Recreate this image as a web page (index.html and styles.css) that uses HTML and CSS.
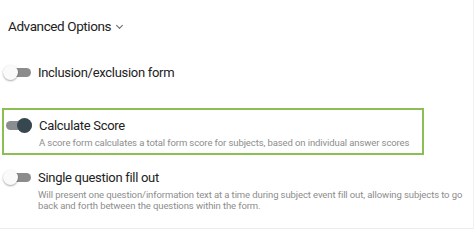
FILE: index.html
```html
<!DOCTYPE html>
<html lang="en">
<head>
    <meta charset="UTF-8">
    <meta name="viewport" content="width=device-width, initial-scale=1.0">
    <title>Advanced Options</title>
    <link rel="stylesheet" href="styles.css">
</head>
<body>
    <div class="panel">
        <h2 class="section-title">Advanced Options <span class="chevron"></span></h2>

        <div class="option">
            <span class="toggle"><span class="knob"></span></span>
            <div class="option-text">
                <div class="option-label">Inclusion/exclusion form</div>
            </div>
        </div>

        <div class="option selected">
            <span class="toggle on"><span class="knob"></span></span>
            <div class="option-text">
                <div class="option-label">Calculate Score</div>
                <p class="option-desc">A score form calculates a total form score for subjects, based on individual answer scores</p>
            </div>
        </div>

        <div class="option">
            <span class="toggle"><span class="knob"></span></span>
            <div class="option-text">
                <div class="option-label">Single question fill out</div>
                <p class="option-desc">Will present one question/information text at a time during subject event fill out, allowing subjects to go back and forth between the questions within the form.</p>
            </div>
        </div>
    </div>
</body>
</html>
```

FILE: styles.css
```css
body {
    margin: 0;
    background-color: #fff;
    font-family: Roboto, "Noto Sans", sans-serif;
    color: #222;
}
.panel {
    width: 474px;
    height: 229px;
    border-bottom: 1px solid #ececec;
    border-right: 1px solid #f2f2f2;
    box-sizing: border-box;
    padding-top: 16px;
}
.section-title {
    margin: 0 0 28px 8px;
    font-size: 13.5px;
    font-weight: 400;
    line-height: 20px;
    letter-spacing: -0.4px;
    color: #222;
}
.chevron {
    display: inline-block;
    width: 4px;
    height: 4px;
    border-right: 1px solid #666;
    border-bottom: 1px solid #666;
    transform: rotate(45deg);
    margin-left: 3px;
    position: relative;
    top: -3px;
}
.option {
    display: flex;
    align-items: flex-start;
    gap: 7px;
    padding: 0 6px 0 3px;
    margin-bottom: 27px;
}
.option.selected {
    margin-left: 2px;
    width: 422px;
    box-sizing: border-box;
    border: 2px solid #8bbf55;
    padding: 7px 0 5px 0;
    margin-bottom: 14px;
}
.toggle {
    flex: none;
    position: relative;
    width: 28px;
    height: 15px;
    margin-top: 1px;
}
.toggle::before {
    content: "";
    position: absolute;
    left: 2px;
    top: 3px;
    width: 26px;
    height: 9px;
    border-radius: 5px;
    background-color: #8c8c8c;
}
.knob {
    position: absolute;
    left: 0;
    top: 0;
    width: 15px;
    height: 15px;
    border-radius: 50%;
    background-color: #fafafa;
    box-shadow: 0 1px 2px rgba(0, 0, 0, 0.35);
}
.toggle.on::before {
    background-color: #8a8e90;
}
.toggle.on .knob {
    left: 13px;
    background-color: #37474f;
    box-shadow: none;
}
.option-label {
    font-size: 13px;
    line-height: 17px;
    letter-spacing: -0.3px;
    color: #222;
}
.option-desc {
    margin: 3px 0 0;
    font-size: 9.5px;
    line-height: 11px;
    letter-spacing: -0.1px;
    color: #8d8d8d;
}
```
